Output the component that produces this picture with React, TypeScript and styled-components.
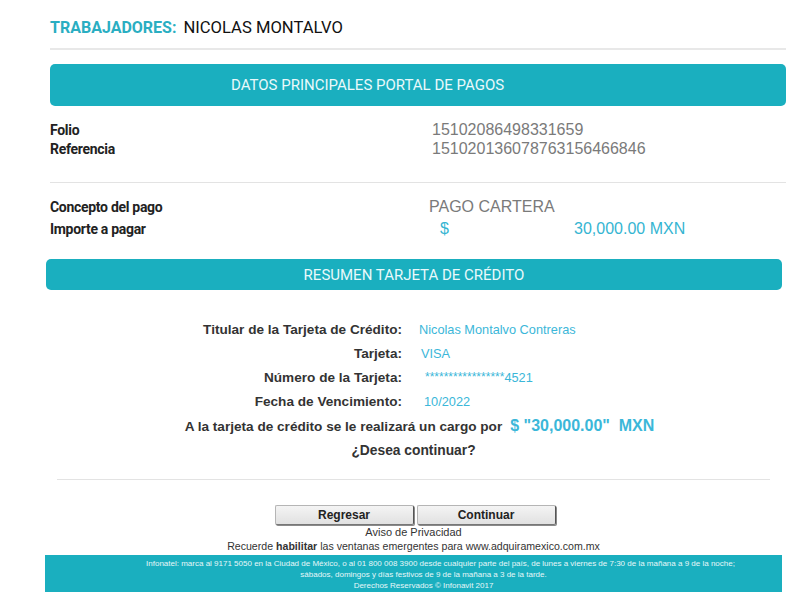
import { createGlobalStyle, styled } from "styled-components";

const GlobalStyle = createGlobalStyle`
  html, body {
    margin: 0;
    padding: 0;
    background: #ffffff;
    font-family: "Liberation Sans", Arial, sans-serif;
    color: #333333;
  }
`;

const teal = "#1aafbf";
const sky = "#3bb7d9";

export default function App() {
  return (
    <>
      <GlobalStyle />
      <Page>
        <TopSection>
          <TitleRow>
            <TitleLabel>TRABAJADORES:</TitleLabel>
            <TitleName>NICOLAS MONTALVO</TitleName>
          </TitleRow>

          <Banner $tall>DATOS PRINCIPALES PORTAL DE PAGOS</Banner>

          <InfoBlock $rowHeight={19} $top={14}>
            <InfoLabel>Folio</InfoLabel>
            <InfoValue>15102086498331659</InfoValue>
            <InfoLabel>Referencia</InfoLabel>
            <InfoValue>151020136078763156466846</InfoValue>
          </InfoBlock>

          <Divider $top={24} />

          <InfoBlock $rowHeight={22} $top={13}>
            <InfoLabel>Concepto del pago</InfoLabel>
            <InfoValue $shift={-3}>PAGO CARTERA</InfoValue>
            <InfoLabel>Importe a pagar</InfoLabel>
            <Amount>
              <span>$</span>
              <span>30,000.00 MXN</span>
            </Amount>
          </InfoBlock>
        </TopSection>

        <Banner>RESUMEN TARJETA DE CRÉDITO</Banner>

        <Summary>
          <SummaryLabel>Titular de la Tarjeta de Crédito:</SummaryLabel>
          <SummaryValue>Nicolas Montalvo Contreras</SummaryValue>
          <SummaryLabel>Tarjeta:</SummaryLabel>
          <SummaryValue $shift={2}>VISA</SummaryValue>
          <SummaryLabel>Número de la Tarjeta:</SummaryLabel>
          <SummaryValue $shift={6}>
            <Stars>*****************</Stars>4521
          </SummaryValue>
          <SummaryLabel>Fecha de Vencimiento:</SummaryLabel>
          <SummaryValue $shift={5}>10/2022</SummaryValue>
        </Summary>

        <Charge>
          A la tarjeta de crédito se le realizará un cargo por
          <ChargeAmount>$ "30,000.00"&nbsp; MXN</ChargeAmount>
        </Charge>
        <Question>¿Desea continuar?</Question>

        <Divider $top={16} $inset />

        <Buttons>
          <Button type="button">Regresar</Button>
          <Button type="button">Continuar</Button>
        </Buttons>
        <Note>Aviso de Privacidad</Note>
        <Note $small>
          Recuerde <b>habilitar</b> las ventanas emergentes para
          www.adquiramexico.com.mx
        </Note>

        <Footer>
          <FooterLine $indent={34}>
            Infonatel: marca al 9171 5050 en la Ciudad de México, o al 01 800
            008 3900 desde cualquier parte del país, de lunes a viernes de 7:30
            de la mañana a 9 de la noche;
          </FooterLine>
          <FooterLine>
            sábados, domingos y días festivos de 9 de la mañana a 3 de la tarde.
          </FooterLine>
          <FooterLine>Derechos Reservados © Infonavit 2017</FooterLine>
        </Footer>
      </Page>
    </>
  );
}

const Page = styled.div`
  width: 737px;
  padding-left: 45px;
`;

const TopSection = styled.div`
  margin-left: 5px;
  width: 736px;
`;

const TitleRow = styled.div`
  display: flex;
  align-items: baseline;
  gap: 7px;
  height: 50px;
  box-sizing: border-box;
  padding-top: 18px;
  border-bottom: 2px solid #e8e8e8;
`;

const TitleLabel = styled.span`
  font-family: Roboto, sans-serif;
  font-weight: 700;
  font-size: 16px;
  color: #2aaec2;
`;

const TitleName = styled.span`
  font-family: Roboto, sans-serif;
  font-size: 16.6px;
  color: #111111;
`;

const Banner = styled.div<{ $tall?: boolean }>`
  box-sizing: border-box;
  display: flex;
  align-items: center;
  justify-content: ${(p) => (p.$tall ? "flex-start" : "center")};
  padding-left: ${(p) => (p.$tall ? "181px" : "0")};
  margin-top: ${(p) => (p.$tall ? "14px" : "19px")};
  margin-left: ${(p) => (p.$tall ? "0" : "1px")};
  width: 736px;
  height: ${(p) => (p.$tall ? "42px" : "31px")};
  border-radius: 5px;
  background: ${teal};
  color: #e9f9fb;
  font-family: Roboto, sans-serif;
  font-size: 15px;
`;

const InfoBlock = styled.div<{ $rowHeight: number; $top: number }>`
  display: grid;
  grid-template-columns: 382px 1fr;
  grid-auto-rows: ${(p) => p.$rowHeight}px;
  align-items: center;
  margin-top: ${(p) => p.$top}px;
`;

const InfoLabel = styled.div`
  font-family: Roboto, sans-serif;
  font-weight: 700;
  font-size: 14px;
  letter-spacing: -0.3px;
  color: #222222;
`;

const InfoValue = styled.div<{ $shift?: number }>`
  margin-left: ${(p) => p.$shift ?? 0}px;
  font-size: 16px;
  color: #7a7a7a;
`;

const Amount = styled.div`
  display: grid;
  grid-template-columns: 134px auto;
  padding-left: 8px;
  font-size: 16px;
  color: #35b5d2;
`;

const Divider = styled.div<{ $top: number; $inset?: boolean }>`
  margin-top: ${(p) => p.$top}px;
  margin-left: ${(p) => (p.$inset ? "12px" : "0")};
  width: ${(p) => (p.$inset ? "713px" : "736px")};
  height: 1px;
  background: #e3e3e3;
`;

const Summary = styled.div`
  display: grid;
  grid-template-columns: 357px 1fr;
  column-gap: 17px;
  grid-auto-rows: 24px;
  align-items: center;
  margin-top: 27px;
`;

const SummaryLabel = styled.div`
  text-align: right;
  font-weight: 700;
  font-size: 13.6px;
  color: #333333;
`;

const SummaryValue = styled.div<{ $shift?: number }>`
  margin-left: ${(p) => p.$shift ?? 0}px;
  font-size: 12.75px;
  color: ${sky};
`;

const Stars = styled.span`
  font-size: 12px;
  position: relative;
  top: -1px;
`;

const Charge = styled.div`
  display: flex;
  justify-content: center;
  align-items: center;
  gap: 8px;
  height: 26px;
  padding-left: 12px;
  font-weight: 700;
  font-size: 13.6px;
  color: #333333;
`;

const ChargeAmount = styled.span`
  font-size: 16px;
  color: ${sky};
`;

const Question = styled.div`
  height: 24px;
  line-height: 24px;
  text-align: center;
  font-weight: 700;
  font-size: 13.8px;
  color: #333333;
`;

const Buttons = styled.div`
  display: flex;
  justify-content: center;
  gap: 3px;
  margin-top: 25px;
  padding-left: 3px;
`;

const Button = styled.button`
  width: 139px;
  height: 20px;
  padding: 0;
  border: 1px solid #b5b5b5;
  border-right-color: #555555;
  border-bottom-color: #777777;
  border-radius: 2px;
  background: linear-gradient(#f4f4f4, #e1e1e1);
  box-shadow: 1px 1px 0 #8a8a8a;
  font-family: "Liberation Sans", Arial, sans-serif;
  font-weight: 700;
  font-size: 12px;
  color: #222222;
`;

const Note = styled.div<{ $small?: boolean }>`
  height: 14px;
  line-height: 14px;
  text-align: center;
  font-size: ${(p) => (p.$small ? "10.6px" : "11px")};
  color: #333333;

  b {
    font-weight: 700;
  }
`;

const Footer = styled.div`
  display: flex;
  flex-direction: column;
  align-items: center;
  box-sizing: border-box;
  width: 737px;
  height: 37px;
  margin-top: 2px;
  padding-top: 3px;
  padding-left: 20px;
  background: ${teal};
  color: #e6f7f9;
  font-size: 8px;
  line-height: 11px;
`;

const FooterLine = styled.span<{ $indent?: number }>`
  padding-left: ${(p) => p.$indent ?? 0}px;
  white-space: nowrap;
`;
